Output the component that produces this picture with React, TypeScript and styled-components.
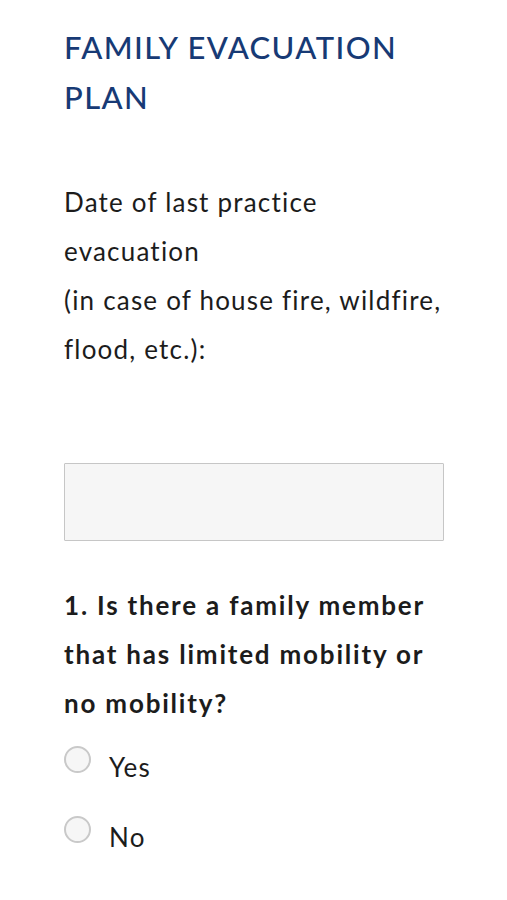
import styled, { createGlobalStyle } from "styled-components";

const GlobalStyle = createGlobalStyle`
  body {
    margin: 0;
    background: #ffffff;
    font-family: Lato, "Open Sans", sans-serif;
    color: #1c1c1c;
  }
`;

const Page = styled.div`
  padding: 22px 63px 40px 64px;
  width: 380px;
`;

const Title = styled.h1`
  margin: 0 0 56px;
  font-size: 31px;
  line-height: 50px;
  font-weight: 500;
  letter-spacing: 1.4px;
  color: #173a75;
  text-transform: uppercase;
`;

const Label = styled.p`
  margin: 0 0 89px;
  font-size: 26px;
  line-height: 49px;
  font-weight: 400;
  letter-spacing: 1.2px;
`;

const DateInput = styled.input`
  display: block;
  box-sizing: border-box;
  width: 380px;
  height: 78px;
  margin: 0 0 40px;
  background: #f6f6f6;
  border: 1px solid #c6c6c6;
  border-radius: 1px;
  outline: none;
  font-family: inherit;
  font-size: 22px;
  padding: 0 12px;
`;

const Question = styled.h2`
  margin: 0 0 23px;
  font-size: 26px;
  line-height: 49px;
  font-weight: 700;
  letter-spacing: 1.8px;
`;

const Options = styled.div`
  display: flex;
  flex-direction: column;
  gap: 40px;
`;

const Option = styled.label`
  display: flex;
  align-items: flex-start;
  gap: 18px;
  font-size: 26px;
  line-height: 28px;
  letter-spacing: 1.2px;
  cursor: pointer;
`;

const Circle = styled.span`
  box-sizing: border-box;
  width: 27px;
  height: 27px;
  margin-top: -5px;
  border-radius: 50%;
  border: 2px solid #c9c9c9;
  background: #f6f6f6;
  flex-shrink: 0;
`;

const OptionText = styled.span`
  padding-top: 2px;
`;

export default function App() {
  return (
    <>
      <GlobalStyle />
      <Page>
        <Title>Family Evacuation Plan</Title>
        <Label>
          Date of last practice evacuation
          <br />
          (in case of house fire, wildfire, flood, etc.):
        </Label>
        <DateInput type="text" aria-label="Date of last practice evacuation" />
        <Question>1. Is there a family member that has limited mobility or no mobility?</Question>
        <Options>
          <Option>
            <Circle />
            <OptionText>Yes</OptionText>
          </Option>
          <Option>
            <Circle />
            <OptionText>No</OptionText>
          </Option>
        </Options>
      </Page>
    </>
  );
}
